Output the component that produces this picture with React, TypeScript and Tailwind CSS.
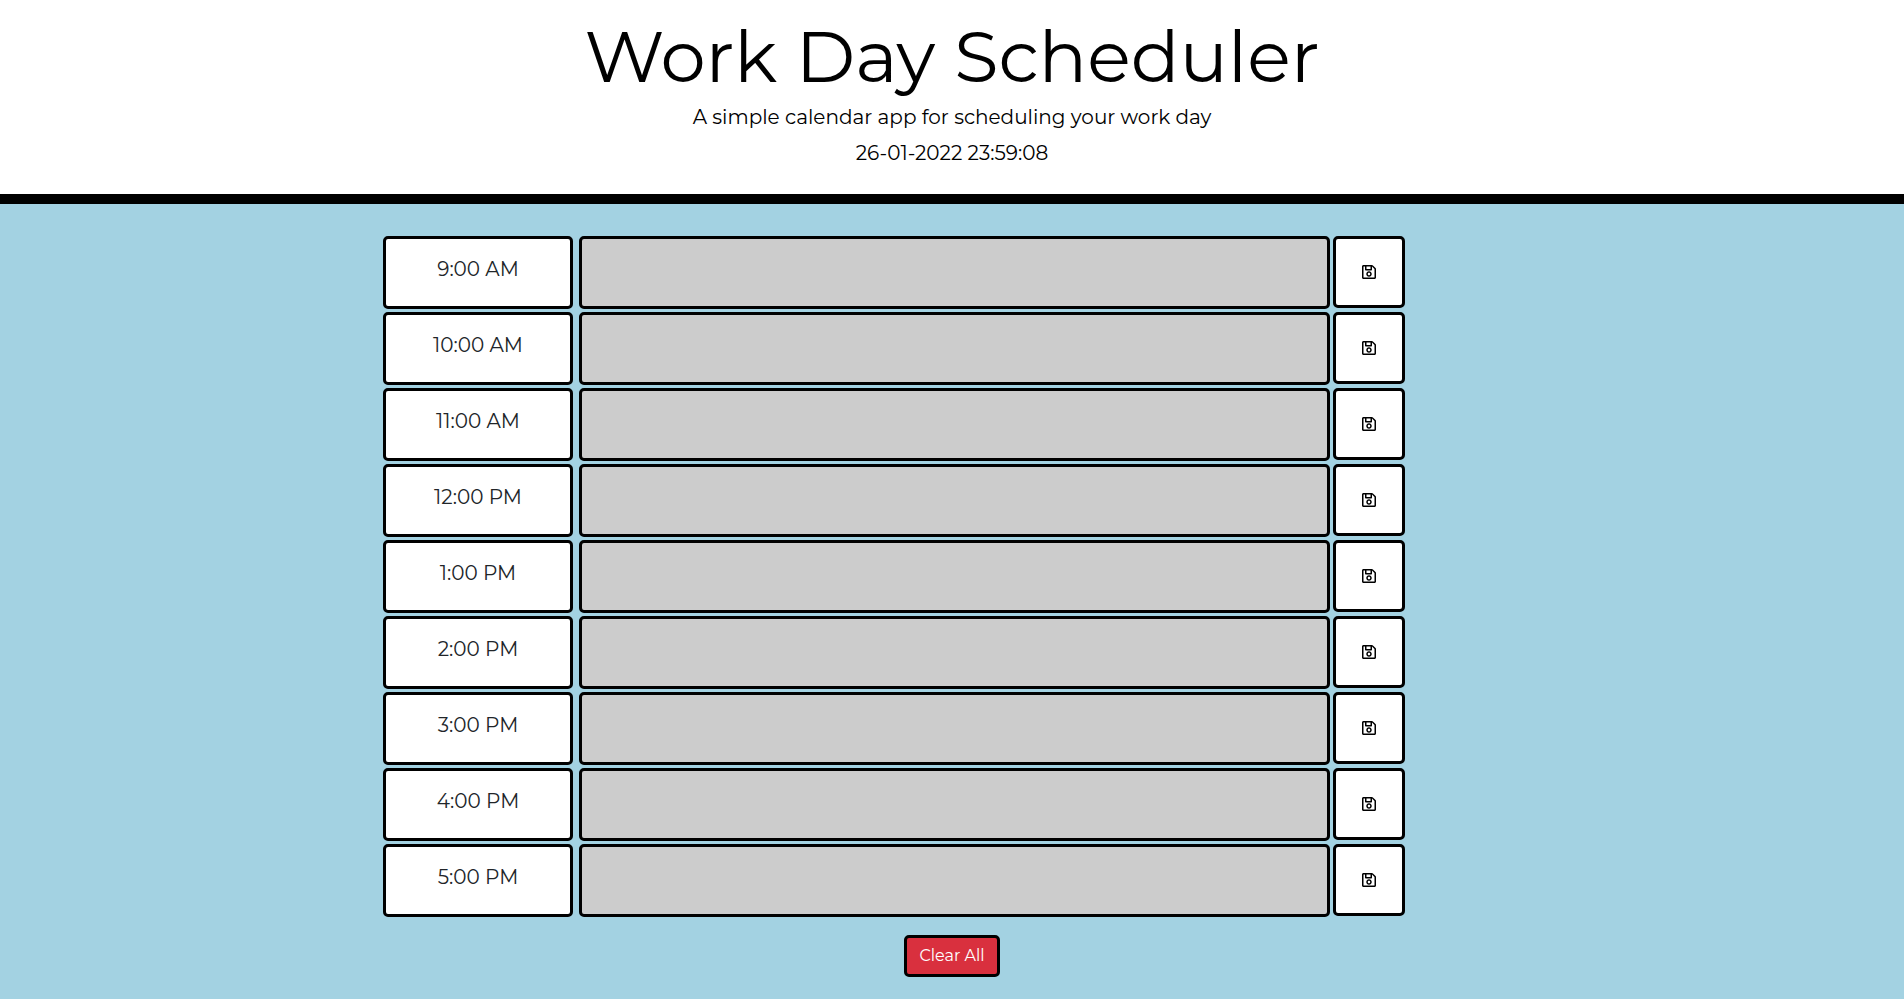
import { useState } from "react";
import { FaRegSave } from "react-icons/fa";

const HOURS = [
  "9:00 AM",
  "10:00 AM",
  "11:00 AM",
  "12:00 PM",
  "1:00 PM",
  "2:00 PM",
  "3:00 PM",
  "4:00 PM",
  "5:00 PM",
];

type RowProps = {
  hour: string;
  value: string;
  onChange: (text: string) => void;
};

function TimeBlock({ hour, value, onChange }: RowProps) {
  const id = "block-" + hour.replace(/[: ]/g, "-");
  return (
    <div className="flex items-start">
      <label
        htmlFor={id}
        className="mr-1.5 h-[73px] w-[190px] shrink-0 rounded-[5px] border-3 border-black bg-white pt-4 text-center text-xl leading-7 text-[#212529]"
      >
        {hour}
      </label>
      <textarea
        id={id}
        value={value}
        onChange={(e) => onChange(e.target.value)}
        className="mr-[3px] block h-[73px] min-w-0 flex-1 resize-none rounded-[5px] border-3 border-black bg-[#cccccc] p-2 text-black"
      />
      <button
        type="button"
        aria-label={"Save " + hour}
        className="flex size-[72px] shrink-0 items-center justify-center rounded-[5px] border-3 border-black bg-white text-base text-black"
      >
        <FaRegSave />
      </button>
    </div>
  );
}

export default function App() {
  const [notes, setNotes] = useState<Record<string, string>>({});
  return (
    <div className="min-h-screen bg-[#a3d2e2] font-['Montserrat','Inter',sans-serif] text-black">
      <header className="border-b-10 border-black bg-white pt-4 pb-[26px] text-center">
        <h1 className="text-7xl leading-20">Work Day Scheduler</h1>
        <p className="mt-1.5 text-xl leading-[30px]">A simple calendar app for scheduling your work day</p>
        <p className="mt-1.5 text-xl leading-[30px]">26-01-2022 23:59:08</p>
      </header>
      <main className="mx-auto max-w-[1138px] pt-8 pb-5">
        <div className="flex w-full max-w-[1022px] flex-col gap-[3px]">
          {HOURS.map((hour) => (
            <TimeBlock
              key={hour}
              hour={hour}
              value={notes[hour] ?? ""}
              onChange={(text) => setNotes({ ...notes, [hour]: text })}
            />
          ))}
        </div>
        <div className="mt-[18px] flex justify-center">
          <button
            type="button"
            onClick={() => setNotes({})}
            className="rounded-[5px] border-3 border-black bg-[#d9303e] px-3 py-1.5 text-base leading-6 text-white"
          >
            Clear All
          </button>
        </div>
      </main>
    </div>
  );
}
